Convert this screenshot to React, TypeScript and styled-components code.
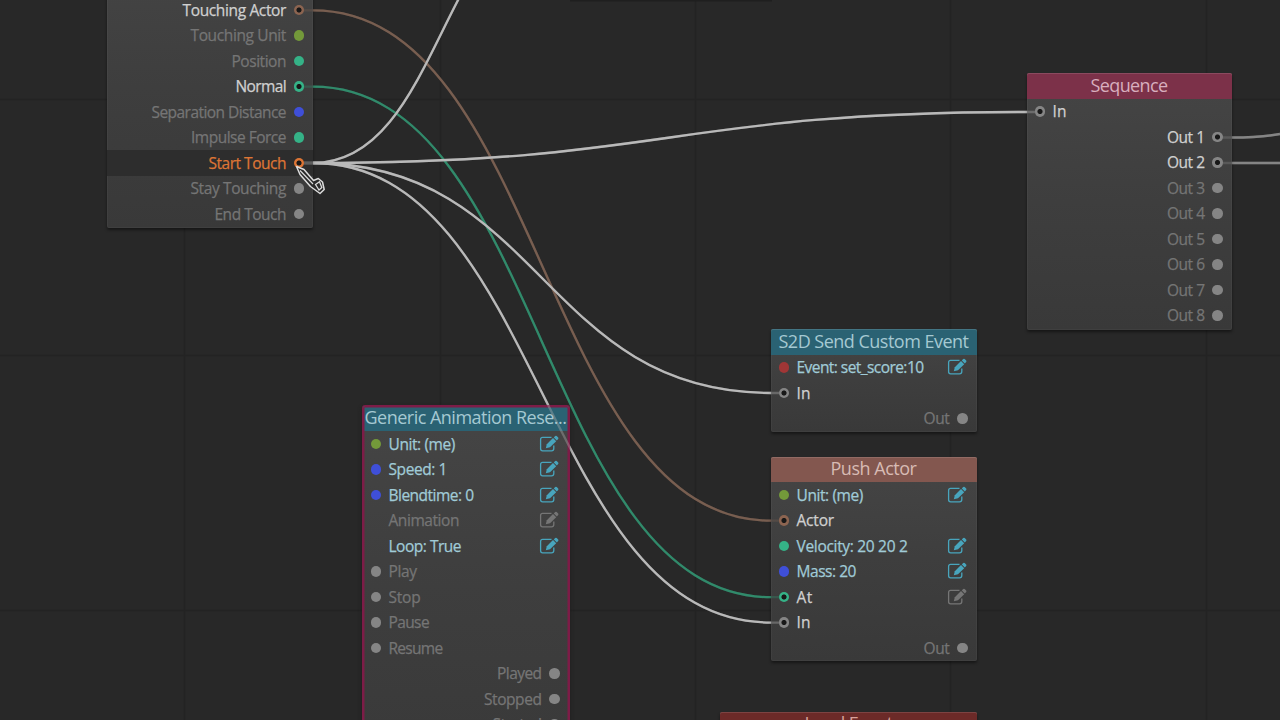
import React from 'react';
import styled, { createGlobalStyle } from 'styled-components';

const GlobalStyle = createGlobalStyle`
  html, body { margin: 0; background: #282828; overflow: hidden; }
`;

const Canvas = styled.main`
  position: relative;
  width: 1280px;
  height: 720px;
  overflow: hidden;
  background: #282828;
  font-family: "Open Sans", "Noto Sans", sans-serif;
`;

const Layer = styled.svg<{ $opacity?: number }>`
  position: absolute;
  inset: 0;
  width: 1280px;
  height: 720px;
  opacity: ${(p) => p.$opacity ?? 1};
  pointer-events: none;
`;

const NodeBox = styled.section<{ $selected?: boolean }>`
  position: absolute;
  box-sizing: border-box;
  border-radius: 2px;
  background: linear-gradient(#454545, #3e3e3e 50%, #393939);
  box-shadow: ${(p) =>
    p.$selected
      ? '0 0 0 1px #7d1c47, 0 2px 5px #1a1a1a'
      : 'inset 0 0 0 1px rgba(255,255,255,.035), 0 2px 3px rgba(0,0,0,.45)'};
  &::after {
    content: '';
    position: absolute;
    inset: 0;
    border-radius: 2px;
    pointer-events: none;
    box-shadow: ${(p) => (p.$selected ? 'inset 0 0 0 1.5px #7d1c47' : 'none')};
  }
`;

const Header = styled.header<{ $bg: string; $fg: string }>`
  height: 25.5px;
  box-sizing: border-box;
  display: flex;
  justify-content: center;
  align-items: center;
  padding-bottom: 2px;
  border-radius: 2px 2px 0 0;
  background: ${(p) => p.$bg};
  color: ${(p) => p.$fg};
  font-size: 18px;
  line-height: 24px;
  white-space: nowrap;
  box-shadow: inset 0 1px 0 rgba(255, 255, 255, 0.12);
`;

const Row = styled.div<{ $out?: boolean; $hot?: boolean }>`
  height: 25.5px;
  box-sizing: border-box;
  display: flex;
  align-items: center;
  flex-direction: ${(p) => (p.$out ? 'row-reverse' : 'row')};
  gap: 7.5px;
  padding: 0 9px 0 8px;
  background: ${(p) => (p.$hot ? '#2d2d2d' : 'transparent')};
`;

const Pin = styled.i<{ $color: string; $open?: boolean; $hidden?: boolean }>`
  flex: none;
  box-sizing: border-box;
  width: 10.5px;
  height: 10.5px;
  border-radius: 50%;
  visibility: ${(p) => (p.$hidden ? 'hidden' : 'visible')};
  background: ${(p) =>
    p.$open
      ? `radial-gradient(circle, #181818 2.1px, ${p.$color} 3px)`
      : p.$color};
`;

const Label = styled.span<{ $color: string }>`
  color: ${(p) => p.$color};
  font-size: 15.5px;
  line-height: 24px;
  white-space: nowrap;
  -webkit-text-stroke: 0.25px ${(p) => p.$color};
`;

const Fit = styled.span`
  display: inline-block;
`;

const EditIcon = styled.svg`
  flex: none;
  width: 20px;
  height: 18px;
  margin-left: auto;
  margin-right: 0.5px;
`;

const DIM = '#757575';
const WHITE = '#d0d0d0';
const CYAN = '#a0cbd7';
const GREEN = '#35b287';
const BLUE = '#3f4fd8';
const OLIVE = '#73993a';
const GREY = '#858585';
const BROWN = '#8c6450';

type RowData = {
  t: string;
  c?: string;
  pin?: string;
  open?: boolean;
  out?: boolean;
  hot?: boolean;
  edit?: string;
  w?: number;
};

function FitText({ children, w }: { children: string; w?: number }) {
  const ref = React.useRef<HTMLSpanElement>(null);
  React.useLayoutEffect(() => {
    const el = ref.current;
    if (!el || !w) return;
    el.style.letterSpacing = '0px';
    const natural = el.getBoundingClientRect().width;
    el.style.letterSpacing = `${(w - natural) / children.length}px`;
  }, [w, children]);
  return <Fit ref={ref}>{children}</Fit>;
}

function Edit({ color }: { color: string }) {
  return (
    <EditIcon viewBox="0 0 20 18" fill="none" stroke={color}>
      <path d="M12.5 2.4H3.6Q1.6 2.4 1.6 4.4V13.8Q1.6 15.8 3.6 15.8H12.5Q14.8 15.8 14.8 13.4V10.5" strokeWidth="1.3" />
      <path d="M6.8 13.2L7.8 9.2L14 3L17.2 6.2L11 12.3Z" fill={color} stroke="none" />
      <path d="M14.8 2.4L16.2 1Q17 .4 17.7 1L19.2 2.5Q19.7 3.2 19.2 3.9L17.8 5.4Z" fill={color} stroke="none" />
    </EditIcon>
  );
}

function Rows({ rows }: { rows: RowData[] }) {
  return (
    <>
      {rows.map((r) => (
        <Row key={r.t} $out={r.out} $hot={r.hot}>
          <Pin $color={r.pin ?? GREY} $open={r.open} $hidden={r.pin === 'none'} />
          <Label $color={r.c ?? DIM}>
            <FitText w={r.w}>{r.t}</FitText>
          </Label>
          {r.edit && <Edit color={r.edit} />}
        </Row>
      ))}
    </>
  );
}

const TouchNode = styled(NodeBox)`
  left: 107px;
  top: -54px;
  width: 206px;
  height: 282px;
  padding-top: 51.2px;
`;
const AnimNode = styled(NodeBox)`
  left: 362.5px;
  top: 405.5px;
  width: 206px;
  height: 360px;
`;
const SendNode = styled(NodeBox)`
  left: 770.5px;
  top: 329px;
  width: 206px;
  height: 103px;
`;
const PushNode = styled(NodeBox)`
  left: 770.5px;
  top: 456.5px;
  width: 206px;
  height: 204.5px;
`;
const SequenceNode = styled(NodeBox)`
  left: 1026.5px;
  top: 73.2px;
  width: 205px;
  height: 256.5px;
`;
const LevelNode = styled(NodeBox)`
  left: 720px;
  top: 711.5px;
  width: 257px;
  height: 80px;
`;

const EDIT_ON = '#48a5bd';
const EDIT_OFF = '#757575';

const touchRows: RowData[] = [
  { t: 'Touching Actor', c: WHITE, pin: BROWN, open: true, out: true, w: 103.5 },
  { t: 'Touching Unit', pin: OLIVE, out: true, w: 95.5 },
  { t: 'Position', pin: GREEN, out: true, w: 54.5 },
  { t: 'Normal', c: WHITE, pin: GREEN, open: true, out: true, w: 50.5 },
  { t: 'Separation Distance', pin: BLUE, out: true, w: 134.5 },
  { t: 'Impulse Force', pin: GREEN, out: true, w: 95 },
  { t: 'Start Touch', c: '#dd7535', pin: '#dd7535', open: true, out: true, hot: true, w: 77.5 },
  { t: 'Stay Touching', out: true, w: 95.5 },
  { t: 'End Touch', out: true, w: 71.5 },
];

const animRows: RowData[] = [
  { t: 'Unit: (me)', c: CYAN, pin: OLIVE, edit: EDIT_ON, w: 66.5 },
  { t: 'Speed: 1', c: CYAN, pin: BLUE, edit: EDIT_ON, w: 58.5 },
  { t: 'Blendtime: 0', c: CYAN, pin: BLUE, edit: EDIT_ON, w: 85 },
  { t: 'Animation', pin: 'none', edit: EDIT_OFF, w: 70.5 },
  { t: 'Loop: True', c: CYAN, pin: 'none', edit: EDIT_ON, w: 72.5 },
  { t: 'Play', w: 28 },
  { t: 'Stop', w: 32 },
  { t: 'Pause', w: 40.5 },
  { t: 'Resume', w: 54 },
  { t: 'Played', out: true, w: 44.5 },
  { t: 'Stopped', out: true, w: 57.5 },
  { t: 'Started', out: true, w: 49 },
];

const sendRows: RowData[] = [
  { t: 'Event: set_score:10', c: CYAN, pin: '#a03636', edit: EDIT_ON, w: 127 },
  { t: 'In', c: WHITE, open: true, w: 14 },
  { t: 'Out', out: true, w: 26 },
];

const pushRows: RowData[] = [
  { t: 'Unit: (me)', c: CYAN, pin: OLIVE, edit: EDIT_ON, w: 66.5 },
  { t: 'Actor', c: WHITE, pin: BROWN, open: true, w: 37.5 },
  { t: 'Velocity: 20 20 2', c: CYAN, pin: GREEN, edit: EDIT_ON, w: 111 },
  { t: 'Mass: 20', c: CYAN, pin: BLUE, edit: EDIT_ON, w: 59.5 },
  { t: 'At', c: WHITE, pin: GREEN, open: true, edit: EDIT_OFF, w: 16 },
  { t: 'In', c: WHITE, open: true, w: 14 },
  { t: 'Out', out: true, w: 26 },
];

const sequenceRows: RowData[] = [
  { t: 'In', c: WHITE, open: true, w: 14 },
  ...[1, 2, 3, 4, 5, 6, 7, 8].map((n) => ({
    t: `Out ${n}`,
    out: true,
    open: n < 3,
    c: n < 3 ? WHITE : DIM,
    w: 37.5,
  })),
];

const link = (x1: number, y1: number, x2: number, y2: number) => {
  const m = (x1 + x2) / 2;
  return `M${x1 - 9} ${y1}H${x1}C${m} ${y1} ${m} ${y2} ${x2} ${y2}H${x2 + 8}`;
};

function Cables() {
  return (
    <g fill="none" strokeWidth="2.3">
      <path stroke="#785e50" d={link(313, 10.3, 771, 520.7)} />
      <path stroke="#318a6b" d={link(313, 86.7, 771, 597.2)} />
      <g stroke="#b9b9b9">
        <path d={link(313, 163, 571, -99)} />
        <path d={link(313, 163, 1027, 112)} />
        <path d={link(313, 163, 771, 393)} />
        <path d={link(313, 163, 771, 622.6)} />
      </g>
      <path stroke="#858585" d="M1223 137.5H1232Q1260 137.5 1280 134" />
      <path stroke="#858585" d="M1223 163H1280" />
    </g>
  );
}

export default function App() {
  return (
    <Canvas>
      <GlobalStyle />
      <Layer>
        <path
          d="M184.5 0V720M440.5 0V720M695.5 0V720M950.5 0V720M1206.5 0V720M0 99.5H1280M0 355.5H1280M0 610.5H1280"
          stroke="#232323"
          strokeWidth="1.5"
        />
        <path d="M570 0H772" stroke="#1f1f1f" strokeWidth="3" />
        <Cables />
      </Layer>

      <TouchNode>
        <Rows rows={touchRows} />
      </TouchNode>
      <SequenceNode>
        <Header $bg="#7c3149" $fg="#d8aebe">
          <FitText w={77}>Sequence</FitText>
        </Header>
        <Rows rows={sequenceRows} />
      </SequenceNode>
      <SendNode>
        <Header $bg="#2a6273" $fg="#a5c9d2">
          <FitText w={190}>S2D Send Custom Event</FitText>
        </Header>
        <Rows rows={sendRows} />
      </SendNode>
      <PushNode>
        <Header $bg="#83574f" $fg="#d8bbb4">
          <FitText w={86}>Push Actor</FitText>
        </Header>
        <Rows rows={pushRows} />
      </PushNode>
      <AnimNode $selected>
        <Header $bg="#2a6273" $fg="#a5c9d2">
          <FitText w={202}>Generic Animation Rese...</FitText>
        </Header>
        <Rows rows={animRows} />
      </AnimNode>
      <LevelNode>
        <Header $bg="#6c2a28" $fg="#d8a29c">
          <FitText w={88}>Level Event</FitText>
        </Header>
      </LevelNode>

      <Layer $opacity={0.35}>
        <Cables />
      </Layer>
      <Layer>
        <path
          d="M296.5 166.5L300 174.5L310.5 186.5L320 193.5L324.2 189.5L322.5 182L318.3 178.5L313.5 180.5L304 169.5Z"
          fill="#2a2a2a"
          stroke="#dcdcdc"
          strokeWidth="1.5"
          strokeLinejoin="round"
        />
        <path d="M300 170.5L313 184" stroke="#dcdcdc" strokeWidth="1.2" />
        <path d="M315.5 184.5L319.5 181.8L321.8 187.5L319 190Z" fill="none" stroke="#dcdcdc" strokeWidth="1.3" />
      </Layer>
    </Canvas>
  );
}
